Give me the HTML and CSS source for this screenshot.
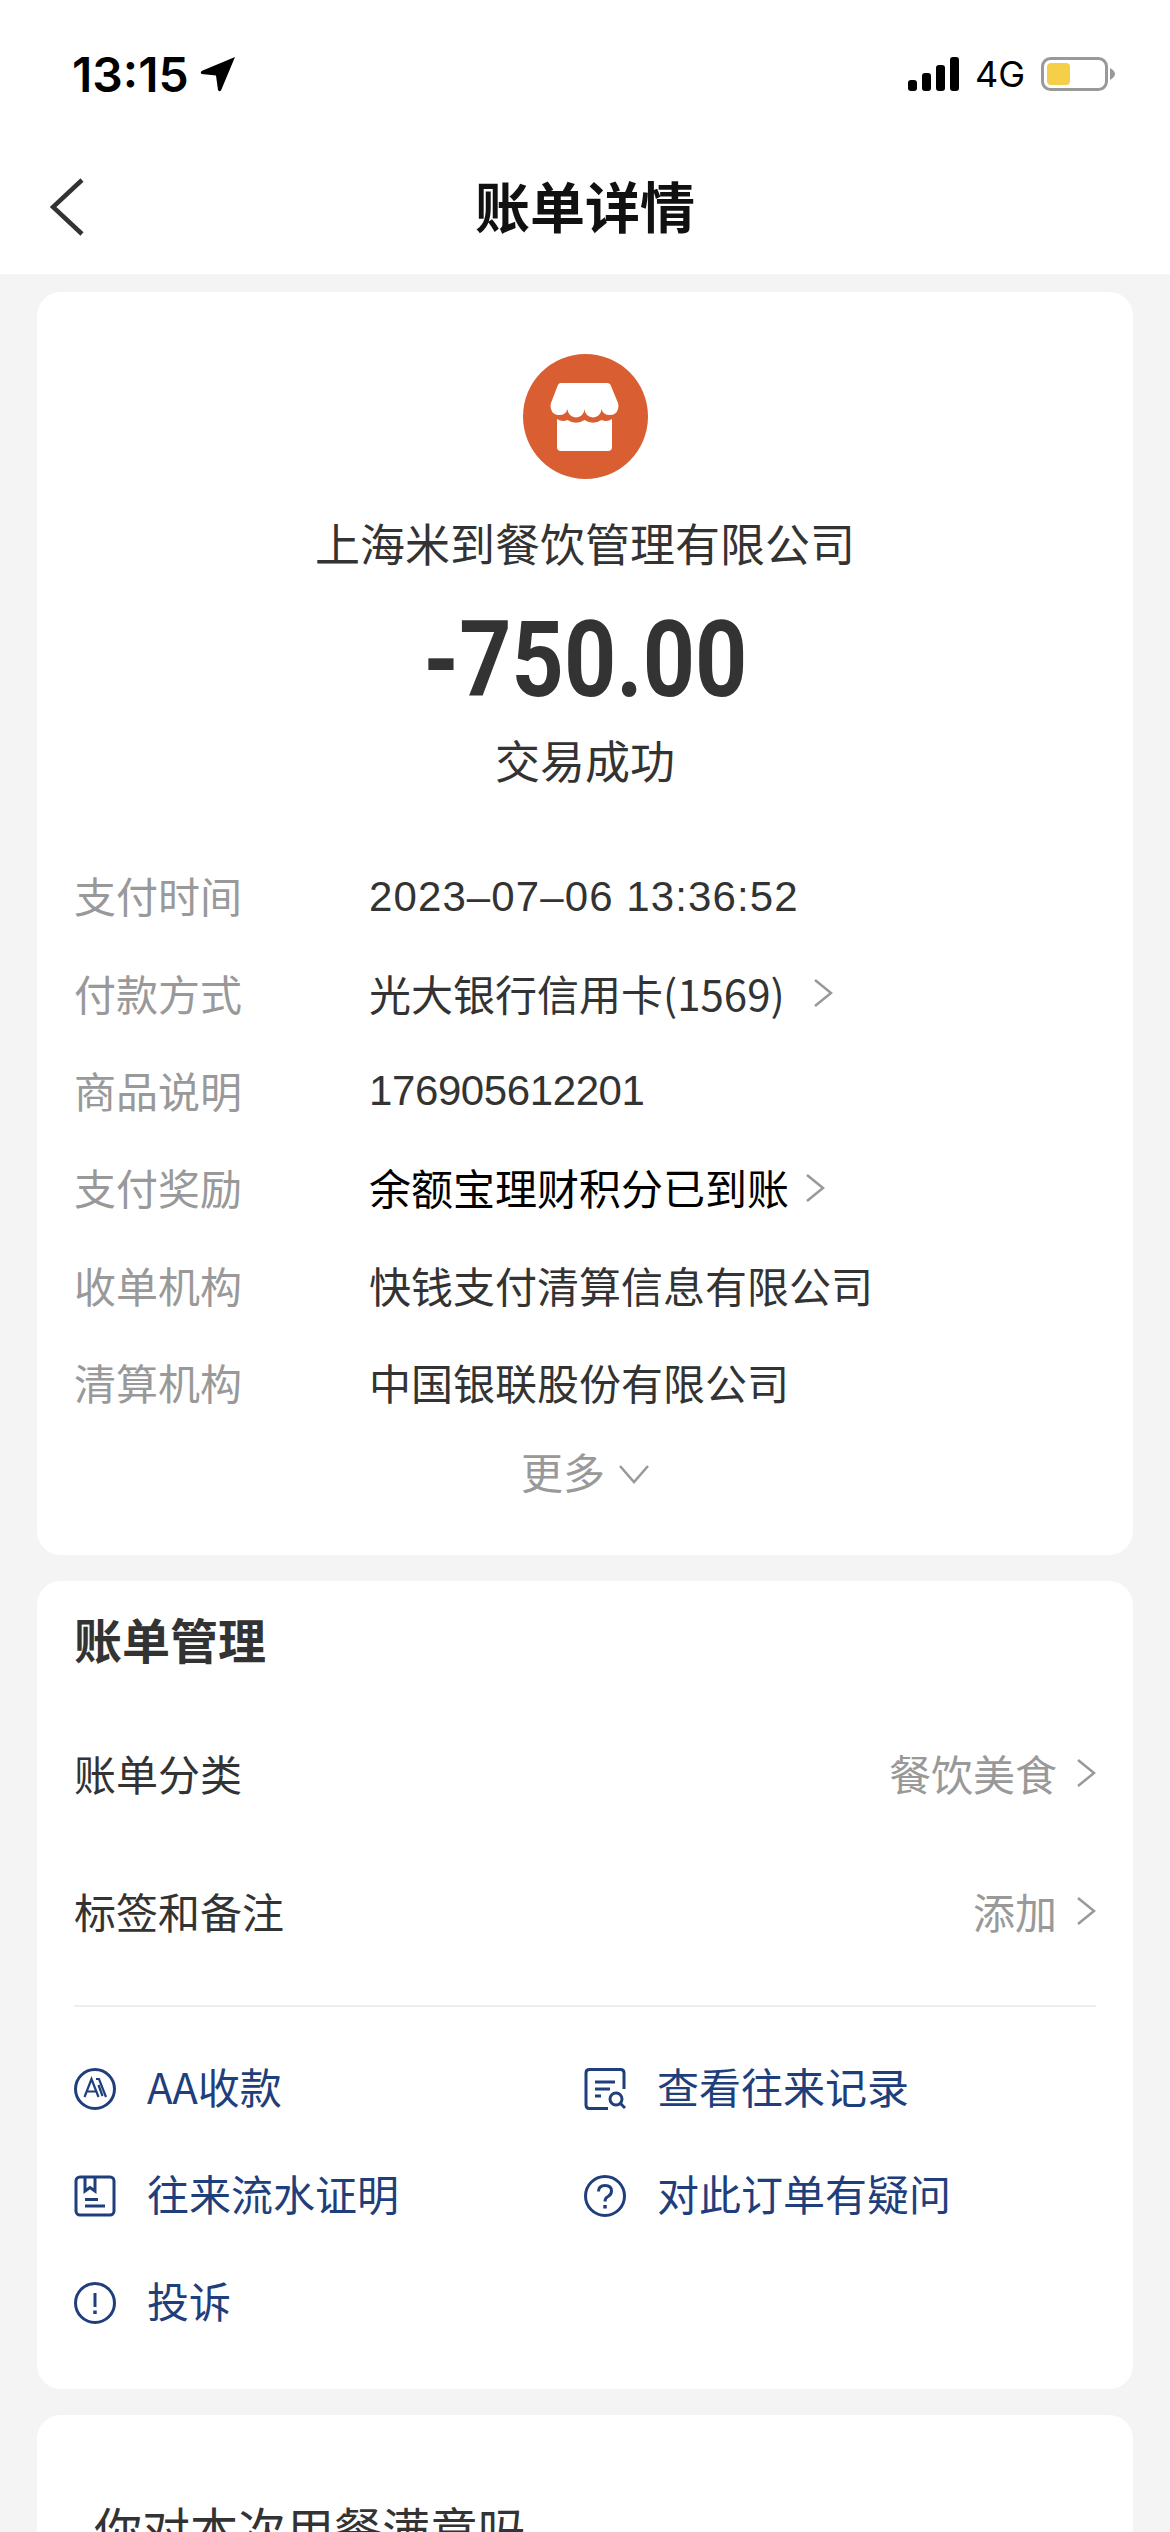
FILE: index.html
```html
<!DOCTYPE html>
<html lang="zh-CN">
<head>
	<meta charset="utf-8">
	<title>账单详情</title>
	<link rel="stylesheet" href="styles.css">
</head>
<body>
<div id="container">

	<div class="statusbar">
		<div class="status-left">
			<span class="clock">13:15</span>
			<svg class="locate" viewBox="0 0 36 36"><path d="M35 1 L21 34.500 Q19 36 18 34 L16 19.500 L1.500 18 Q0 16.500 1.500 15 Z" fill="#000"/></svg>
		</div>
		<div class="status-right">
			<svg class="signal" viewBox="0 0 51 34">
				<rect x="0" y="23" width="9" height="11" rx="3"/>
				<rect x="14" y="16" width="9" height="18" rx="3"/>
				<rect x="28" y="8" width="9" height="26" rx="3"/>
				<rect x="42" y="0" width="9" height="34" rx="3"/>
			</svg>
			<span class="network">4G</span>
			<svg class="battery" viewBox="0 0 74 34">
				<rect x="1.500" y="1.500" width="64" height="31" rx="8" fill="none" stroke="#999" stroke-width="3"/>
				<rect x="6" y="6" width="23" height="22" rx="4" fill="#f5cf47"/>
				<path d="M69 11 Q74 14 74 17 Q74 20 69 23 Z" fill="#999"/>
			</svg>
		</div>
	</div>

	<div class="navbar">
		<svg class="back" viewBox="0 0 34 58"><path d="M32 2 L3 29 L32 56" fill="none" stroke="#333" stroke-width="4.500"/></svg>
		<h1>账单详情</h1>
	</div>

	<div class="page">

		<div class="card summary">
			<svg class="shop" viewBox="0 0 125 125">
				<circle cx="62.500" cy="62.500" r="62.500" fill="#d95f33"/>
				<path d="M38 29 H84 Q87 29 88 32 L95 49 Q96 52 95 55 A8.500 8 0 0 1 78.500 55 A8 8 0 0 1 61.500 55 A8 8 0 0 1 44.500 55 A8.500 8 0 0 1 28 55 Q27 52 28 49 L34.500 32 Q35.500 29 38 29 Z" fill="#fff"/>
				<path d="M34 65 Q39 68.500 44.500 66 Q53 71.500 61.500 66 Q70 71.500 78.500 66 Q84 68.500 89 65 V93 Q89 97 85 97 H38 Q34 97 34 93 Z" fill="#fff"/>
			</svg>
			<div class="merchant">上海米到餐饮管理有限公司</div>
			<div class="amount">-750.00</div>
			<div class="result">交易成功</div>

			<div class="details">
				<div class="detail"><span class="label">支付时间</span><span class="value date">2023–07–06 13:36:52</span></div>
				<div class="detail"><span class="label">付款方式</span><span class="value">光大银行信用卡(1569)<svg class="arrow pay" viewBox="0 0 20 30"><path d="M2 2 L18 15 L2 28"/></svg></span></div>
				<div class="detail"><span class="label">商品说明</span><span class="value number">176905612201</span></div>
				<div class="detail"><span class="label">支付奖励</span><span class="value strong">余额宝理财积分已到账<svg class="arrow" viewBox="0 0 20 30"><path d="M2 2 L18 15 L2 28"/></svg></span></div>
				<div class="detail"><span class="label">收单机构</span><span class="value">快钱支付清算信息有限公司</span></div>
				<div class="detail"><span class="label">清算机构</span><span class="value">中国银联股份有限公司</span></div>
			</div>

			<div class="more">更多<svg class="arrow-down" viewBox="0 0 30 20"><path d="M1 2 L15 18 L29 2"/></svg></div>
		</div>

		<div class="card manage">
			<h2>账单管理</h2>
			<div class="setting">
				<span>账单分类</span>
				<span class="setting-value">餐饮美食<svg class="arrow" viewBox="0 0 20 30"><path d="M2 2 L18 15 L2 28"/></svg></span>
			</div>
			<div class="setting">
				<span>标签和备注</span>
				<span class="setting-value">添加<svg class="arrow" viewBox="0 0 20 30"><path d="M2 2 L18 15 L2 28"/></svg></span>
			</div>
			<div class="divider"></div>
			<div class="actions">
				<div class="action">
					<svg class="icon" viewBox="0 0 42 42">
						<circle cx="21" cy="21" r="19.500"/>
						<path class="thin" d="M10.500 29 L17.500 11 L24.500 29 M13 23.500 H22"/>
						<path class="thin" d="M22 11 H25 L32 29 M24.500 17 L28.500 28"/>
					</svg>
					<span>AA收款</span>
				</div>
				<div class="action">
					<svg class="icon" viewBox="0 0 42 42">
						<path d="M40 21 V5 Q40 1.500 36.500 1.500 H5.500 Q2 1.500 2 5 V37 Q2 40.500 5.500 40.500 H24"/>
						<path d="M11 14 H31 M11 21 H26 M11 28 H17"/>
						<circle cx="32" cy="31" r="6"/>
						<path d="M36.500 35.500 L41 40"/>
					</svg>
					<span>查看往来记录</span>
				</div>
				<div class="action">
					<svg class="icon" viewBox="0 0 42 42">
						<rect x="2" y="2" width="38" height="38" rx="4"/>
						<path d="M11 3 V16 L16 12.500 L21 16 V3"/>
						<path d="M11 24.500 H24 M11 31 H31"/>
					</svg>
					<span>往来流水证明</span>
				</div>
				<div class="action">
					<svg class="icon" viewBox="0 0 42 42">
						<circle cx="21" cy="21" r="19.500"/>
						<path d="M14.500 16.500 Q14.500 10.500 21 10.500 Q27.500 10.500 27.500 16 Q27.500 19.500 24 21.500 Q21 23 21 26.500"/>
						<path class="dot" d="M21 30 V33.500"/>
					</svg>
					<span>对此订单有疑问</span>
				</div>
				<div class="action">
					<svg class="icon" viewBox="0 0 42 42">
						<circle cx="21" cy="21" r="19.500"/>
						<path d="M21 11 V25"/>
						<path class="dot" d="M21 28.500 V32"/>
					</svg>
					<span>投诉</span>
				</div>
			</div>
		</div>

		<div class="card survey">
			<div class="question">你对本次用餐满意吗</div>
		</div>

	</div>
</div>
</body>
</html>
```

FILE: styles.css
```css
/* Reset */

* { margin: 0; padding: 0; box-sizing: border-box; }

html, body {
	height: 100%;
}

body {
	background-color: #f4f4f4;
	overflow: hidden;
}

#container {
	width: 1170px;
	height: 2532px;
	overflow: hidden;
	font-family: "Noto Sans CJK SC", "Liberation Sans", sans-serif;
	font-size: 42px;
	color: #333;
}


/* Status bar */

.statusbar {
	height: 148px;
	background-color: white;
	padding: 0 55px 0 72px;
	display: flex;
	justify-content: space-between;
	align-items: center;
}

.status-left, .status-right {
	display: flex;
	align-items: center;
}

.clock {
	font-family: Inter, sans-serif;
	font-size: 48px;
	font-weight: 600;
	color: #000;
}

.locate {
	width: 36px;
	height: 36px;
	margin-left: 11px;
}

.signal {
	width: 51px;
	height: 34px;
	fill: #000;
}

.network {
	font-family: Inter, sans-serif;
	font-size: 36px;
	color: #000;
	margin: 0 16px 0 16px;
	line-height: 40px;
}

.battery {
	width: 74px;
	height: 34px;
}


/* Nav bar */

.navbar {
	height: 126px;
	background-color: white;
	padding-bottom: 14px;
	position: relative;
	display: flex;
	align-items: center;
	justify-content: center;
}

.navbar h1 {
	font-size: 55px;
	font-weight: 700;
	color: #111;
	line-height: 70px;
}

.back {
	position: absolute;
	left: 50px;
	top: 30px;
	width: 34px;
	height: 58px;
}


/* Cards */

.page {
	padding: 18px 37px 0;
	display: flex;
	flex-direction: column;
	gap: 26px;
}

.card {
	background-color: white;
	border-radius: 24px;
}


/* Summary */

.summary {
	padding: 62px 37px 45px;
	display: flex;
	flex-direction: column;
	align-items: center;
}

.shop {
	width: 125px;
	height: 125px;
}

.merchant {
	font-size: 45px;
	line-height: 60px;
	margin-top: 34px;
}

.amount {
	font-family: Roboto, sans-serif;
	font-size: 106px;
	font-weight: 700;
	line-height: 120px;
	margin-top: 27px;
	transform: scaleX(0.86);
}

.result {
	font-size: 45px;
	line-height: 60px;
	margin-top: 10px;
}

.details {
	width: 100%;
	margin-top: 56px;
}

.detail {
	height: 97.400px;
	display: flex;
	align-items: center;
}

.label {
	width: 295px;
	color: #999;
	flex-shrink: 0;
}

.value {
	display: flex;
	align-items: center;
}

.date, .number {
	font-family: "Liberation Sans", sans-serif;
	padding-top: 4px;
}

.date {
	letter-spacing: 1.100px;
}

.number {
	letter-spacing: -0.400px;
}

.strong {
	color: #000;
}

.arrow {
	width: 20px;
	height: 30px;
	margin-left: 19px;
	margin-top: 2px;
	fill: none;
	stroke: #999;
	stroke-width: 2.500;
}

.value .arrow {
	margin-left: 16px;
}

.value .arrow.pay {
	margin-left: 28px;
}

.more {
	height: 80px;
	width: 100%;
	display: flex;
	align-items: center;
	justify-content: center;
	color: #999;
}

.arrow-down {
	width: 30px;
	height: 20px;
	margin-left: 14px;
	margin-top: 8px;
	fill: none;
	stroke: #999;
	stroke-width: 2.500;
}


/* Bill management */

.manage {
	padding: 27px 37px 33px;
}

.manage h2 {
	font-size: 48px;
	font-weight: 700;
	line-height: 60px;
	margin-bottom: 35px;
}

.setting {
	height: 138px;
	display: flex;
	align-items: center;
	justify-content: space-between;
}

.setting-value {
	display: flex;
	align-items: center;
	color: #999;
}

.divider {
	height: 2px;
	background-color: #eee;
	margin-top: 26px;
}

.actions {
	margin-top: 28px;
	display: grid;
	grid-template-columns: 510px 1fr;
	grid-auto-rows: 107px;
}

.action {
	display: flex;
	align-items: center;
	gap: 31px;
	color: #1f3f7c;
}

.action span {
	padding-bottom: 6px;
}

.icon {
	width: 42px;
	height: 42px;
	fill: none;
	stroke: #1f3f7c;
	stroke-width: 3;
	flex-shrink: 0;
}

.icon .dot {
	stroke-width: 3.500;
}

.icon .thin {
	stroke-width: 2.200;
}


/* Survey */

.survey {
	height: 300px;
	padding: 82px 57px 0;
}

.question {
	font-size: 48px;
	line-height: 60px;
}
```
